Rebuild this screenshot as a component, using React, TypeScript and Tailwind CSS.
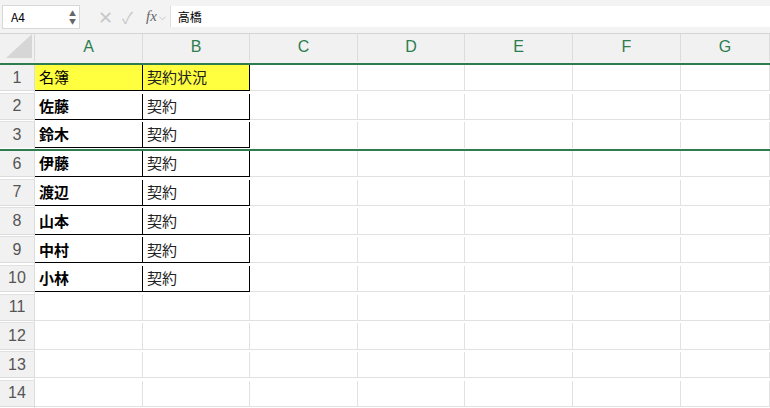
import React from "react";

const cols = ["A", "B", "C", "D", "E", "F", "G"];
const rows: [string, string, string, boolean][] = [
  ["1", "名簿", "契約状況", false],
  ["2", "佐藤", "契約", true],
  ["3", "鈴木", "契約", true],
  ["6", "伊藤", "契約", true],
  ["7", "渡辺", "契約", true],
  ["8", "山本", "契約", true],
  ["9", "中村", "契約", true],
  ["10", "小林", "契約", true],
  ["11", "", "", false],
  ["12", "", "", false],
  ["13", "", "", false],
  ["14", "", "", false],
];
const gridCls = "grid grid-cols-[35px_108px_107px_108px_107px_108px_108px_1fr]";
const font = { fontFamily: '"Noto Sans CJK JP","Liberation Sans",sans-serif' };

export default function App() {
  return (
    <div className="w-[770px] h-[408px] overflow-hidden bg-white text-black" style={font}>
      <div className="h-[34px] bg-[#f3f3f3] flex items-center border-b border-[#d4d4d4]">
        <div className="ml-[2px] w-[78px] h-[24px] bg-white border border-[#d8d8d8] flex items-center justify-between pl-[8px] pr-[3px] text-[12px]">
          <span>A4</span>
          <span className="flex flex-col text-[7px] leading-[8px] text-[#666]"><span>▲</span><span>▼</span></span>
        </div>
        <div className="w-[12px]" />
        <span className="text-[#c8c8c8] text-[18px] ml-[6px] w-[24px]">✕</span>
        <span className="text-[#c8c8c8] text-[16px] w-[24px]">✓</span>
        <span className="text-[#666] italic text-[15px]" style={{ fontFamily: '"Liberation Serif",serif' }}>fx</span>
        <span className="text-[#aaa] text-[9px] ml-[2px]">⌵</span>
        <div className="ml-[4px] flex-1 h-[21px] bg-white border-l border-[#ddd] flex items-center pl-[7px] text-[12px]">高橋</div>
      </div>
      <div className={`${gridCls} h-[31px] bg-[#f1f1f1] border-b-2 border-[#2e7d4f]`}>
        <div className="border-r border-[#d8d8d8] relative overflow-hidden">
          <div className="absolute right-[2px] bottom-[3px] w-0 h-0 border-l-[26px] border-l-transparent border-b-[24px] border-b-[#d6d6d6]" />
        </div>
        {cols.map((c) => (
          <div key={c} className="border-r border-[#dcdcdc] flex items-center justify-center text-[16px] text-[#2e7d4f]" style={{ fontFamily: '"Liberation Sans",sans-serif' }}>{c}</div>
        ))}
        <div />
      </div>
      {rows.map(([n, a, b, bold], i) => (
        <div key={n} className={`${gridCls} h-[28.7px] ${n === "3" ? "border-b-2 border-[#2e7d4f]" : ""}`}>
          <div className={`bg-[#f1f1f1] border-r border-[#d8d8d8] flex items-center justify-center text-[16px] text-[#555] ${n === "3" ? "" : "border-b border-[#dcdcdc]"}`} style={{ fontFamily: '"Liberation Sans",sans-serif' }}>{n}</div>
          <div className={`flex items-center pl-[4px] text-[15px] ${bold ? "font-semibold" : ""} ${i === 0 ? "bg-[#ffff40]" : ""} ${i < 8 ? "border-b border-r border-black" : "border-b border-r border-[#e1e1e1]"}`}>{a}</div>
          <div className={`flex items-center pl-[4px] text-[15px] text-[#222] ${i === 0 ? "bg-[#ffff40]" : ""} ${i < 8 ? "border-b border-r border-black" : "border-b border-r border-[#e1e1e1]"}`}>{b}</div>
          {[0, 1, 2, 3, 4, 5].map((k) => (
            <div key={k} className={`border-r border-[#e1e1e1] ${n === "3" ? "" : "border-b"}`} />
          ))}
        </div>
      ))}
    </div>
  );
}
